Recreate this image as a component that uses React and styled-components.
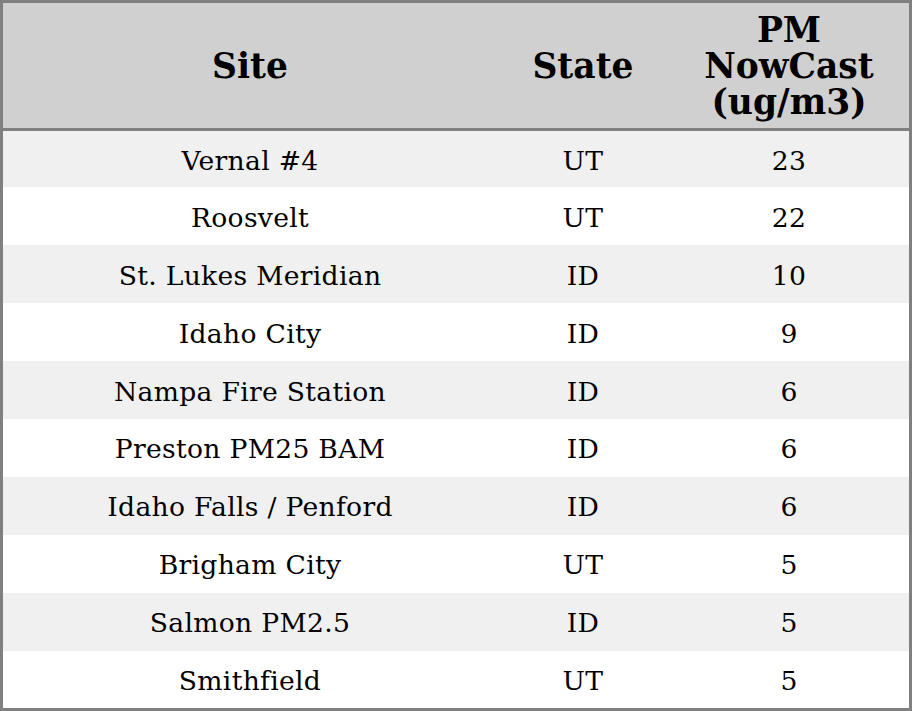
import React from 'react'
import styled, { createGlobalStyle } from 'styled-components'

const GlobalStyle = createGlobalStyle`
  body {
    margin: 0;
    background-color: #ffffff;
    font-family: "DejaVu Serif", serif;
  }
`

const Frame = styled.div`
  width: 912px;
  height: 711px;
  box-sizing: border-box;
  border: 3px solid #808080;
  overflow: hidden;
`

const Table = styled.table`
  width: 100%;
  border-collapse: collapse;
  table-layout: fixed;
`

const HeadCell = styled.th`
  height: 125px;
  padding: 0 6px;
  background-color: #d0d0d0;
  border-bottom: 3px solid #808080;
  font-size: 34.5px;
  line-height: 36px;
  font-weight: bold;
  color: #000000;
  text-align: center;
  vertical-align: middle;
`

const Row = styled.tr`
  height: 57.9px;
  background-color: ${(props) => (props.$odd ? '#f0f0f0' : '#ffffff')};
`

const Cell = styled.td`
  padding: 2px 0 0;
  font-size: 26.6px;
  line-height: 31px;
  letter-spacing: 0.3px;
  color: #000000;
  text-align: center;
  vertical-align: middle;
`

const sites = [
  { site: 'Vernal #4', state: 'UT', value: 23 },
  { site: 'Roosvelt', state: 'UT', value: 22 },
  { site: 'St. Lukes Meridian', state: 'ID', value: 10 },
  { site: 'Idaho City', state: 'ID', value: 9 },
  { site: 'Nampa Fire Station', state: 'ID', value: 6 },
  { site: 'Preston PM25 BAM', state: 'ID', value: 6 },
  { site: 'Idaho Falls / Penford', state: 'ID', value: 6 },
  { site: 'Brigham City', state: 'UT', value: 5 },
  { site: 'Salmon PM2.5', state: 'ID', value: 5 },
  { site: 'Smithfield', state: 'UT', value: 5 }
]

export default function App() {
  return (
    <>
      <GlobalStyle />
      <Frame>
        <Table>
          <colgroup>
            <col style={{ width: '494px' }} />
            <col style={{ width: '172px' }} />
            <col style={{ width: '240px' }} />
          </colgroup>
          <thead>
            <tr>
              <HeadCell>Site</HeadCell>
              <HeadCell>State</HeadCell>
              <HeadCell>PM NowCast (ug/m3)</HeadCell>
            </tr>
          </thead>
          <tbody>
            {sites.map((item, index) => (
              <Row key={index} $odd={index % 2 === 0}>
                <Cell>{item.site}</Cell>
                <Cell>{item.state}</Cell>
                <Cell>{item.value}</Cell>
              </Row>
            ))}
          </tbody>
        </Table>
      </Frame>
    </>
  )
}
